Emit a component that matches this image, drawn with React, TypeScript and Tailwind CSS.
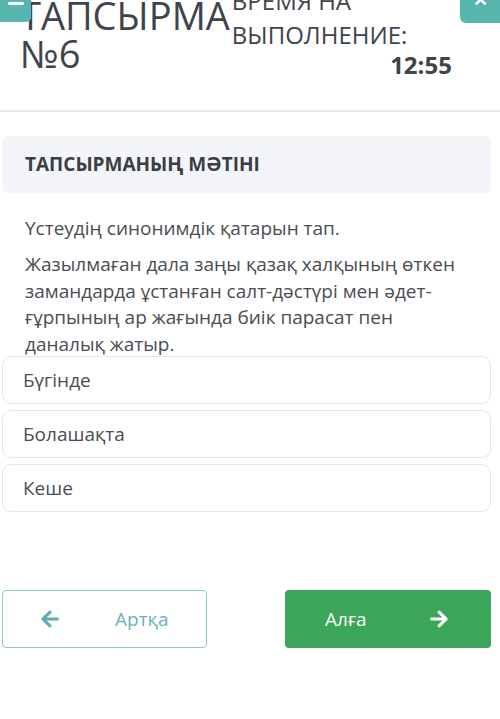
import React from "react";
import { FaArrowLeft, FaArrowRight } from "react-icons/fa";

export default function App() {
  return (
    <div
      className="relative w-[500px] min-h-[719px] overflow-hidden bg-white text-[#444a52]"
      style={{ fontFamily: '"Open Sans", "Noto Sans", sans-serif' }}
    >
      {/* top-left teal button (cut off) */}
      <div className="absolute left-0 top-0 z-10 flex h-[22px] w-[31px] items-start justify-center rounded-br-[5px] bg-[#56b5ad]">
        <div className="mt-[2px] h-[3px] w-[16px] rounded-sm bg-white" />
      </div>
      {/* top-right teal button (cut off) */}
      <div className="absolute right-0 top-0 z-10 flex h-[23px] w-[40px] items-start justify-center rounded-bl-[6px] bg-[#56b5ad]">
        <span className="mt-[-10px] text-[18px] font-bold leading-none text-white">✕</span>
      </div>

      {/* header */}
      <div className="flex h-[112px] border-b-2 border-[#e8e8e8] pl-5">
        <div className="mt-[-4px] flex flex-col text-[38px] leading-[38px] text-[#3f444b]">
          <span>ТАПСЫРМА</span>
          <span>№6</span>
        </div>
        <div className="flex w-[222px] flex-col pl-[2px] text-[#3f444b]">
          <div className="mt-[-16px] text-[24px] leading-[33.6px]">
            <div>ВРЕМЯ НА</div>
            <div>ВЫПОЛНЕНИЕ:</div>
          </div>
          <div className="mt-[-2px] text-right text-[24px] font-bold leading-[32px]">12:55</div>
        </div>
      </div>

      {/* content */}
      <div className="pl-[2px] pr-[9px] pt-[24px]">
        <div className="flex h-[57px] items-center rounded-[6px] bg-[#f4f5f8] pl-[23px]">
          <span className="text-[19px] font-bold text-[#3a3f47]">ТАПСЫРМАНЫҢ МӘТІНІ</span>
        </div>

        <div className="mt-[22px] w-[470px] pl-[23px] text-[19px] leading-[26.5px] text-[#4a4d52]">
          <p>Үстеудің синонимдік қатарын тап.</p>
          <p className="mt-[9.5px]">
            Жазылмаған дала заңы қазақ халқының өткен замандарда ұстанған салт-дәстүрі мен әдет-ғұрпының ар жағында биік парасат пен даналық жатыр.
          </p>
        </div>

        <div className="mt-[-1px] flex flex-col gap-[6px]">
          {["Бүгінде", "Болашақта", "Кеше"].map((o) => (
            <div
              key={o}
              className="flex h-[48px] items-center rounded-[9px] border border-[#e6e6e6] bg-white pl-[20px] text-[19px] text-[#4a4d52]"
            >
              {o}
            </div>
          ))}
        </div>

        <div className="mt-[78px] flex justify-between">
          <button className="flex h-[58px] w-[205px] items-center rounded-[4px] border border-[#93c6cb] bg-white pl-[37px] text-[19px] text-[#6cb2b8]">
            <FaArrowLeft size={20} className="text-[#5aadb3]" />
            <span className="ml-[55px]">Артқа</span>
          </button>
          <button className="flex h-[58px] w-[206px] items-center rounded-[4px] bg-[#3ba55a] pl-[40px] text-[19px] text-white">
            <span>Алға</span>
            <FaArrowRight size={20} className="ml-[62px] text-white" />
          </button>
        </div>
      </div>
    </div>
  );
}
